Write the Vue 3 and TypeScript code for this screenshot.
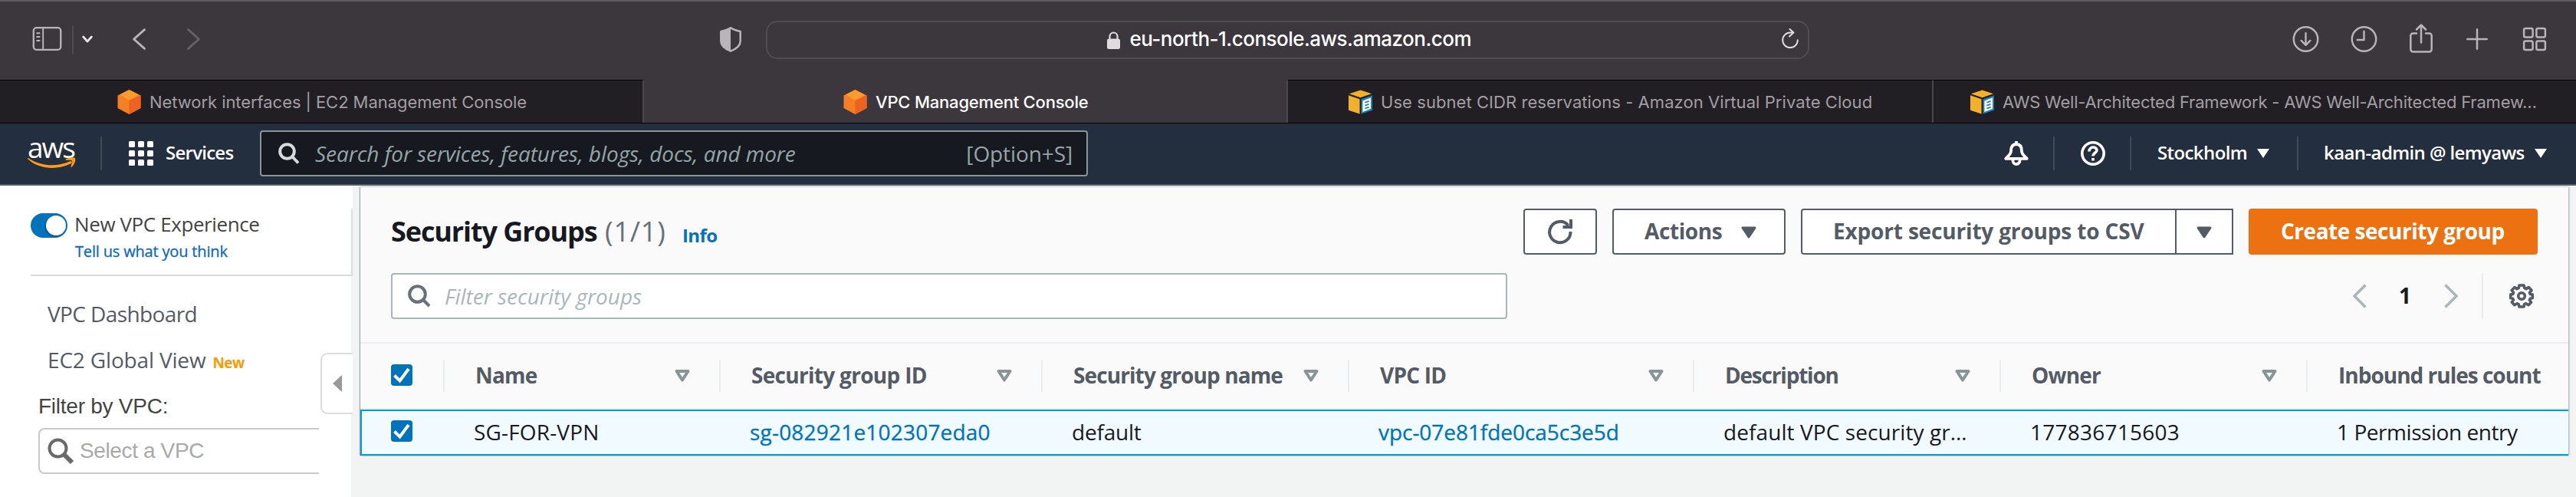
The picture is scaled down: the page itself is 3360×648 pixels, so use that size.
<script setup lang="ts">
interface Tab { title: string; icon: 'cube' | 'doc'; active?: boolean; cls: string }
interface Column { key: string; label: string; value: string; link?: boolean; sortable: boolean }

const tabs: Tab[] = [
  { title: 'Network interfaces | EC2 Management Console', icon: 'cube', cls: 't1' },
  { title: 'VPC Management Console', icon: 'cube', active: true, cls: 't2' },
  { title: 'Use subnet CIDR reservations - Amazon Virtual Private Cloud', icon: 'doc', cls: 't3' },
  { title: 'AWS Well-Architected Framework - AWS Well-Architected Framew…', icon: 'doc', cls: 't4' },
]

const columns: Column[] = [
  { key: 'name', label: 'Name', value: 'SG-FOR-VPN', sortable: true },
  { key: 'sgid', label: 'Security group ID', value: 'sg-082921e102307eda0', link: true, sortable: true },
  { key: 'sgname', label: 'Security group name', value: 'default', sortable: true },
  { key: 'vpc', label: 'VPC ID', value: 'vpc-07e81fde0ca5c3e5d', link: true, sortable: true },
  { key: 'desc', label: 'Description', value: 'default VPC security gr…', sortable: true },
  { key: 'owner', label: 'Owner', value: '177836715603', sortable: true },
  { key: 'inbound', label: 'Inbound rules count', value: '1 Permission entry', sortable: false },
]
</script>

<template>
  <div class="screen">
    <header class="toolbar">
      <svg class="i-side" viewBox="0 0 39 32" fill="none" stroke="#b9b3ba" stroke-width="2.4">
        <rect x="1.2" y="1.2" width="36.6" height="29.6" rx="4" />
        <path d="M14 1V31M5 8.5h5M5 13.5h5M5 18.5h5" stroke-width="2" />
      </svg>
      <span class="tb-div"></span>
      <svg class="i-chev" viewBox="0 0 14 10" fill="none" stroke="#e6e2e7" stroke-width="2.8" stroke-linecap="round" stroke-linejoin="round"><path d="M1.6 2 7 8l5.400-6" /></svg>
      <svg class="i-back" viewBox="0 0 17 28" fill="none" stroke="#b9b3ba" stroke-width="2.8" stroke-linecap="round" stroke-linejoin="round"><path d="M15.500 1.600 1.600 14l13.900 12.400" /></svg>
      <svg class="i-fwd" viewBox="0 0 17 28" fill="none" stroke="#676268" stroke-width="2.8" stroke-linecap="round" stroke-linejoin="round"><path d="M1.500 1.600 15.400 14 1.500 26.400" /></svg>
      <svg class="i-shield" viewBox="0 0 28 33">
        <path d="M14 1.300C18 4 22 5 26.700 6v12.500c0 6.500-6 10.500-12.700 13.200C7.300 29 1.300 25 1.300 18.500V6C6 5 10 4 14 1.300Z" fill="none" stroke="#b9b3ba" stroke-width="2.500" stroke-linejoin="round" />
        <path d="M14 1.300V31.700C7.300 29 1.300 25 1.300 18.500V6C6 5 10 4 14 1.300Z" fill="#b9b3ba" />
      </svg>
      <div class="url">
        <div class="url-label">
          <svg class="i-lock" viewBox="0 0 17 23"><rect y="9.500" width="17" height="13.500" rx="2.500" fill="#dedcdf" /><path d="M3.500 10.500V6.500a5 5 0 0 1 10 0v4" fill="none" stroke="#dedcdf" stroke-width="2.200" /></svg>
          <span>eu-north-1.console.aws.amazon.com</span>
        </div>
        <svg class="i-reload" viewBox="0 0 22 26" fill="none" stroke="#dedcdf" stroke-width="2" stroke-linecap="round" stroke-linejoin="round"><path d="M14.500 5.500H11a9.800 9.800 0 1 0 9.800 9.800M10.500 1l5 4.500-5.500 5" /></svg>
      </div>
      <div class="tools">
        <svg class="k1" viewBox="0 0 35 35"><circle cx="17.500" cy="17.500" r="16.200" /><path d="M17.500 9.500v16M11.500 19.500l6 6 6-6" /></svg>
        <svg class="k2" viewBox="0 0 35 35"><circle cx="17.500" cy="17.500" r="16.200" /><path d="M17.500 7v11.500H8.500" /></svg>
        <svg class="k3" viewBox="0 0 30 38"><path d="M9 12.500H4.500a3.200 3.200 0 0 0-3.200 3.200v17.600a3.200 3.200 0 0 0 3.200 3.200h21a3.200 3.200 0 0 0 3.200-3.200V15.700a3.200 3.200 0 0 0-3.200-3.200H21M15 24.500V2M9 7.500l6-6 6 6" /></svg>
        <svg class="k4" viewBox="0 0 28 28"><path d="M14 1.300v25.400M1.300 14h25.400" /></svg>
        <svg class="k5" viewBox="0 0 30 30"><rect x="1.100" y="1.100" width="11.500" height="11.500" rx="2" /><rect x="17.400" y="1.100" width="11.500" height="11.500" rx="2" /><rect x="1.100" y="17.400" width="11.500" height="11.500" rx="2" /><rect x="17.400" y="17.400" width="11.500" height="11.500" rx="2" /></svg>
      </div>
    </header>

    <div class="tabs">
      <div v-for="t in tabs" :key="t.title" class="tab" :class="[t.cls, { active: t.active }]">
        <svg v-if="t.icon === 'cube'" class="fav" viewBox="0 0 31 32">
          <path d="M.5 7.500 15.500 0l15 7.500V24l-15 8-15-8Z" fill="#f47f24" />
          <path d="M15.500 14 30.500 7v17l-15 8Z" fill="#ec6220" />
          <path d="M15.500 0 28 6.500 15.500 14 3 6.500Z" fill="#ff9a2c" />
        </svg>
        <svg v-else class="fav" viewBox="0 0 32 32">
          <path d="M16 0 31 4.800 16 10 1 4.800Z" fill="#f2b02b" />
          <path d="M0 7 15 12v20L0 27Z" fill="#f2b02b" />
          <path d="M17 12 32 7v20l-15 5Z" fill="#1b7dbb" />
          <path d="M19 14.500 30 10v15l-11 4.500Z" fill="#fff" />
          <path d="M22 16.800l5.500-2M22 20.800l5.500-2M22 24.800l5.500-2" stroke="#1b7dbb" stroke-width="1.800" />
        </svg>
        <span>{{ t.title }}</span>
      </div>
    </div>

    <nav class="nav">
      <div class="logo">
        <span>aws</span>
        <svg viewBox="0 0 63 15"><path d="M1 1C17 12 38 13 55 5.500c2.500-1 4 1 1.500 2.800C38 17.500 14 15.500.3 2.200-.3 1.300.3.500 1 1Z" fill="#ff9a1c" /><path d="M50 2.500c3-2.300 10-3 11.800-1.500 1.500 2-.5 8.500-4 11.500-1 .8-1.800.2-1.300-1 1.300-2.800 2.300-6 1.600-7-.8-1-4.500-1-7.500-.7-1.200.1-1.500-.7-.6-1.300Z" fill="#ff9a1c" /></svg>
      </div>
      <span class="vdiv d1"></span>
      <svg class="i-grid" viewBox="0 0 32 32" fill="#fff"><template v-for="r in 3" :key="r"><rect v-for="c in 3" :key="c" :x="(c - 1) * 12" :y="(r - 1) * 12" width="8" height="8" rx="1.500" /></template></svg>
      <span class="services">Services</span>
      <div class="gsearch">
        <svg class="i-mag" viewBox="0 0 28 28" fill="none" stroke="#d5dbdb" stroke-width="4"><circle cx="11.500" cy="11.500" r="9.300" /><path d="M18 18l8 8.500" /></svg>
        <span class="ph">Search for services, features, blogs, docs, and more</span>
        <span class="kbd">[Option+S]</span>
      </div>
      <svg class="i-bell" viewBox="0 0 32 32" fill="none" stroke="#fff" stroke-width="3.800" stroke-linejoin="round"><path d="M16 0v4M16 4C10 4 9 9 9 13c0 4-3 6-6.800 9.800h27.600C26 19 23 17 23 13c0-4-1-9-7-9Z" /><path d="M11.500 23v2.500a4.500 4.500 0 0 0 9 0V23" /></svg>
      <span class="vdiv d2"></span>
      <svg class="i-help" viewBox="0 0 32 32" fill="none" stroke="#fff" stroke-width="3.600"><circle cx="16" cy="16" r="14.200" /><path d="M11 13.500c0-7 10-7 10-1.500 0 3.500-5 3-5 7.500M16 22v3.600" /></svg>
      <span class="vdiv d3"></span>
      <span class="region">Stockholm</span>
      <svg class="caret c1" viewBox="0 0 16 12"><path d="M0 0h16L8 12Z" fill="#fff" /></svg>
      <span class="vdiv d4"></span>
      <span class="user">kaan-admin @ lemyaws</span>
      <svg class="caret c2" viewBox="0 0 16 12"><path d="M0 0h16L8 12Z" fill="#fff" /></svg>
    </nav>

    <div class="body">
      <aside class="side">
        <div class="exp">
          <div class="exp-row"><span class="toggle"><i></i></span><span class="exp-t">New VPC Experience</span></div>
          <a class="tell">Tell us what you think</a>
        </div>
        <div class="link l1">VPC Dashboard</div>
        <div class="link l2"><span>EC2 Global View</span><b>New</b></div>
        <div class="filter-l">Filter by VPC:</div>
        <div class="vpc-in">
          <svg viewBox="0 0 34 34" fill="none" stroke="#6a6a6a"><circle cx="13.500" cy="13.500" r="11" stroke-width="4" /><path d="M22 22l10 10" stroke-width="6" /></svg>
          <span>Select a VPC</span>
        </div>
        <button class="collapse"><svg viewBox="0 0 12 22"><path d="M12 0v22L0 11Z" fill="#999" /></svg></button>
      </aside>

      <main class="panel">
        <div class="head">
          <h1>Security Groups</h1><span class="count">(1/1)</span><a class="info">Info</a>
          <div class="actions">
            <button class="btn refresh"><svg viewBox="0 0 32 32" fill="none" stroke="#545b64" stroke-width="4"><path d="M29.500 16A13.700 13.700 0 1 1 26.500 8M30 0v10H19.500" /></svg></button>
            <button class="btn act"><span>Actions</span><svg class="tri" viewBox="0 0 20 16"><path d="M2 2h16l-8 12Z" fill="#545b64" stroke="#545b64" stroke-width="3" stroke-linejoin="round" /></svg></button>
            <div class="split">
              <button class="btn exp-b"><span>Export security groups to CSV</span></button>
              <button class="btn more"><svg class="tri" viewBox="0 0 20 16"><path d="M2 2h16l-8 12Z" fill="#545b64" stroke="#545b64" stroke-width="3" stroke-linejoin="round" /></svg></button>
            </div>
            <button class="btn create"><span>Create security group</span></button>
          </div>
        </div>
        <div class="tools-row">
          <div class="search">
            <svg viewBox="0 0 30 30" fill="none" stroke="#687078" stroke-width="4"><circle cx="12.500" cy="12.500" r="10.300" /><path d="M19.500 19.500l8.500 8.500" /></svg>
            <span>Filter security groups</span>
          </div>
          <svg class="pg p1" viewBox="0 0 18 32" fill="none" stroke="#aab7b8" stroke-width="3.600"><path d="M16.500 1.500 2 16l14.500 14.500" /></svg>
          <span class="page">1</span>
          <svg class="pg p2" viewBox="0 0 18 32" fill="none" stroke="#aab7b8" stroke-width="3.600"><path d="M1.500 1.500 16 16 1.500 30.500" /></svg>
          <span class="pdiv"></span>
          <svg class="gear" viewBox="0 0 32 32" fill="none" stroke="#545b64" stroke-width="3.600" stroke-linejoin="round">
            <path d="M13 2h6l.8 3.700 2.200.9 3.200-2L29 8.500 26.500 11.500l.8 2 3 .5v4.500l-3 .7-.9 2 2.100 3-3.500 3.500-3.200-2-2.200.9L19 30h-6l-.8-3.400-2.200-.9-3.200 2L3.300 24l2.100-2.800-.9-2L1.700 18.500V14l3-.5.8-2L3.200 8.500 6.800 4.600l3.200 2 2.200-.9Z" />
            <circle cx="16" cy="16" r="4.300" />
          </svg>
        </div>

        <div class="grid thead">
          <div class="cell check"><span class="cb"><svg viewBox="0 0 28 28" fill="none" stroke="#fff" stroke-width="4"><path d="M4.500 14.500l7 7L23 6" /></svg></span></div>
          <div v-for="c in columns" :key="c.key" class="cell" :class="c.key">
            <span>{{ c.label }}</span>
            <svg v-if="c.sortable" class="sort" viewBox="0 0 20 16"><path d="M2.500 2h15L10 13.500Z" fill="none" stroke="#879596" stroke-width="4" stroke-linejoin="round" /></svg>
          </div>
        </div>
        <div class="grid row">
          <div class="cell check"><span class="cb"><svg viewBox="0 0 28 28" fill="none" stroke="#fff" stroke-width="4"><path d="M4.500 14.500l7 7L23 6" /></svg></span></div>
          <div v-for="c in columns" :key="c.key" class="cell" :class="[c.key, { lnk: c.link }]"><span>{{ c.value }}</span></div>
        </div>
      </main>
    </div>
  </div>
</template>

<style>
body { margin: 0; background: #f2f3f3; overflow: hidden; }
</style>

<style scoped>
.screen { width: 3360px; height: 648px; overflow: hidden; display: flex; flex-direction: column; background: #f2f3f3; font-family: "Open Sans", "Noto Sans", sans-serif; white-space: nowrap; }
.screen * { box-sizing: border-box; }
svg { flex: none; display: block; overflow: visible; }
button { font: inherit; margin: 0; padding: 0; }

.toolbar { height: 104px; background: #3c363d; border-top: 2px solid #5e595f; display: flex; align-items: flex-start; flex: none; font-family: Inter, sans-serif; }
.i-side { width: 39px; height: 31px; margin: 33px 0 0 42px; }
.tb-div { width: 2px; height: 36px; background: #504a51; margin: 32px 0 0 13px; }
.i-chev { width: 14px; height: 10px; margin: 44px 0 0 11px; }
.i-back { width: 17px; height: 28px; margin: 35px 0 0 52px; }
.i-fwd { width: 17px; height: 28px; margin: 35px 0 0 54px; }
.i-shield { width: 28px; height: 33px; margin: 33px 0 0 678px; }
.url { width: 1361px; height: 50px; margin: 25px 0 0 32px; border: 2px solid #504a52; border-radius: 15px; display: flex; align-items: center; justify-content: flex-end; }
.url-label { display: flex; align-items: center; margin-right: 405px; color: #fff; font-size: 26px; font-weight: 500; letter-spacing: -0.52px; padding-bottom: 3px; }
.i-lock { width: 17px; height: 23px; margin-right: 12px; margin-top: 3px; }
.i-reload { width: 22px; height: 26px; margin-right: 12px; margin-bottom: 4px; }
.tools { display: flex; margin-left: 630px; fill: none; stroke: #b9b3ba; stroke-width: 2.500px; stroke-linecap: round; stroke-linejoin: round; }
.k1 { width: 35px; height: 34px; margin-top: 32px; }
.k2 { width: 35px; height: 34px; margin: 32px 0 0 41px; }
.k3 { width: 30px; height: 38px; margin: 29px 0 0 42px; }
.k4 { width: 28px; height: 28px; margin: 35px 0 0 44px; }
.k5 { width: 30px; height: 30px; margin: 34px 0 0 46px; }

.tabs { height: 57px; flex: none; display: grid; grid-template-columns: 840px 840px 842px 838px; font-family: Inter, sans-serif; font-size: 22px; color: #a19ea2; border-bottom: 1px solid #000; background: #3c363d; }
.tab { display: flex; align-items: center; border-top: 1px solid #000; border-right: 2px solid #4a464c; background: #211f24; }
.tab.active { background: #3c363d; color: #fff; font-weight: 500; border-top-color: #3c363d; }
.tab:last-child { border-right: 0; }
.fav { width: 31px; height: 32px; margin-right: 11px; }
.t1 { padding-left: 153px; letter-spacing: -0.06px; }
.t2 { padding-left: 260px; letter-spacing: -0.2px; }
.t3 { padding-left: 79px; letter-spacing: 0.06px; }
.t4 { padding-left: 48px; letter-spacing: -0.2px; }

.nav { height: 81px; flex: none; background: #232f3e; border-bottom: 2px solid #545b64; padding-bottom: 1px; display: flex; align-items: center; color: #fff; font-size: 24px; font-weight: 600; }
.logo { width: 63px; height: 40px; margin-left: 36px; display: flex; flex-direction: column; justify-content: flex-end; }
.logo span { font-size: 37px; font-weight: 500; line-height: 30px; letter-spacing: -2px; height: 28px; }
.logo svg { width: 63px; height: 15px; }
.vdiv { width: 2px; height: 44px; background: #414b57; }
.d1 { margin-left: 32px; }
.i-grid { width: 32px; height: 32px; margin-left: 35px; }
.services { margin-left: 16px; width: 123px; letter-spacing: -0.75px; padding-bottom: 3px; }
.gsearch { width: 1080px; height: 60px; background: #16191f; border: 2px solid #879596; border-radius: 4px; display: flex; align-items: center; color: #95a5a6; font-size: 28px; font-weight: 400; padding: 0 18px 0 22px; }
.i-mag { width: 28px; height: 28px; margin-right: 20px; }
.ph { font-style: italic; font-weight: 500; letter-spacing: -0.07px; flex: 1; }
.kbd { letter-spacing: -0.1px; }
.i-bell { width: 32px; height: 32px; margin-left: 1195px; }
.d2 { margin-left: 32px; }
.i-help { width: 32px; height: 32px; margin-left: 34px; }
.d3 { margin-left: 32px; }
.region { margin-left: 34px; width: 130px; letter-spacing: -0.6px; padding-bottom: 3px; }
.caret { width: 16px; height: 12px; }
.d4 { margin-left: 36px; }
.user { margin-left: 33px; width: 275px; letter-spacing: -0.6px; padding-bottom: 3px; }

.body { display: flex; flex: 1; }
.side { width: 460px; background: #fff; position: relative; color: #444; border-right: 2px solid #f2f3f3; }
.exp { margin-left: 40px; height: 118px; border-bottom: 2px solid #d9d9d9; padding-top: 36px; margin-right: -2px; background: linear-gradient(#dcdcdc, #dcdcdc) right 0 top 30px / 2px 100% no-repeat, #fff; }
.exp-row { display: flex; align-items: center; height: 32px; }
.toggle { width: 48px; height: 32px; border-radius: 16px; background: #0073bb; display: flex; justify-content: flex-end; padding: 3px 2px 3px 0; }
.toggle i { width: 26px; height: 26px; border-radius: 50%; background: #fff; box-shadow: -1px 1px 2px rgba(0,0,0,.35); }
.exp-t { margin-left: 9px; font-size: 26px; letter-spacing: -0.4px; padding-bottom: 4px; }
.tell { display: block; margin-left: 58px; font-size: 20px; line-height: 28px; margin-top: 4px; color: #0a68c4; letter-spacing: -0.17px; -webkit-text-stroke: .3px #0a68c4; }
.link { margin-left: 62px; font-size: 28px; line-height: 40px; height: 40px; color: #545b64; }
.l1 { margin-top: 29px; letter-spacing: -0.6px; }
.l2 { margin-top: 20px; letter-spacing: -0.17px; display: flex; align-items: baseline; }
.l2 b { color: #ff9900; font-size: 19px; line-height: 20px; letter-spacing: -0.6px; margin-left: 9px; }
.filter-l { margin: 21px 0 0 50px; font: 28px/40px "Liberation Sans", Arial, sans-serif; letter-spacing: -0.25px; }
.vpc-in { margin: 8px 0 0 50px; width: 366px; height: 60px; border: 2px solid #c9c9c9; border-right: 0; border-radius: 8px 0 0 8px; display: flex; align-items: center; padding-left: 10px; font: 28px "Liberation Sans", Arial, sans-serif; color: #a9a9a9; letter-spacing: -0.37px; }
.vpc-in svg { width: 34px; height: 34px; margin-right: 8px; }
.collapse { position: absolute; left: 418px; top: 218px; width: 42px; height: 80px; background: #fff; border: 2px solid #ddd; border-right: 0; border-radius: 9px 0 0 9px; padding: 0 0 0 14px; }
.collapse svg { width: 12px; height: 22px; }

.panel { width: 2880px; margin: 2px 0 0 10px; height: 350px; background: #fafafa; box-shadow: -1px 0 1px rgba(0,28,36,.35), 1px 0 2px rgba(0,28,36,.35); }
.head { height: 88px; padding: 28px 40px 0 40px; display: flex; }
h1 { margin: 0; font-size: 36px; line-height: 60px; font-weight: 700; color: #16191f; letter-spacing: -1.100px; width: 279px; }
.count { font-size: 36px; line-height: 60px; color: #687078; letter-spacing: 0.8px; width: 101px; }
.info { font-size: 24px; line-height: 69px; font-weight: 700; color: #0073bb; letter-spacing: -0.6px; }
.actions { margin-left: auto; display: flex; gap: 20px; }
.btn { height: 60px; background: #fff; border: 2px solid #545b64; border-radius: 4px; color: #545b64; font-size: 28px; font-weight: 700; display: flex; align-items: center; padding-bottom: 2px; }
.refresh { width: 96px; justify-content: center; }
.refresh svg { width: 32px; height: 32px; margin-top: 2px; }
.act { width: 226px; padding-left: 40px; letter-spacing: -0.4px; }
.act span { width: 126px; text-align: left; }
.tri { width: 20px; height: 16px; margin-top: 3px; }
.split { display: flex; }
.exp-b { width: 490px; padding-left: 40px; border-radius: 4px 0 0 4px; letter-spacing: -0.17px; }
.more { width: 76px; margin-left: -2px; border-radius: 0; justify-content: center; }
.create { width: 377px; background: #ec7211; border-color: #ec7211; color: #fff; padding-left: 40px; letter-spacing: -0.48px; }
.tools-row { height: 114px; padding: 24px 40px 0 40px; display: flex; align-items: flex-start; }
.search { width: 1456px; height: 60px; background: #fff; border: 2px solid #aab7b8; border-radius: 4px; display: flex; align-items: center; padding-left: 20px; font-size: 28px; font-style: italic; font-weight: 500; color: #aab7b8; letter-spacing: 0; }
.search svg { width: 30px; height: 30px; margin-right: 18px; }
.pg { width: 18px; height: 32px; margin-top: 14px; }
.p1 { margin-left: 1103px; }
.page { width: 16px; margin-left: 42px; font-size: 28px; font-weight: 700; line-height: 58px; color: #16191f; }
.p2 { margin-left: 43px; }
.pdiv { width: 2px; height: 60px; background: #eaeded; margin-left: 31px; }
.gear { width: 32px; height: 32px; margin: 14px 0 0 34px; }

.grid { display: grid; grid-template-columns: 110px 360px 420px 400px 450px 400px 400px 340px; font-size: 28px; }
.thead { height: 88px; border-top: 2px solid #eaeded; border-bottom: 2px solid #eaeded; align-items: center; color: #545b64; font-weight: 700; }
.cell { display: flex; align-items: center; justify-content: space-between; padding: 0 38px 0 40px; }
.thead .cell { height: 42px; border-right: 2px solid #eaeded; }
.thead .cell span { margin-bottom: 2px; }
.thead .cell:last-child { border-right: 0; }
.thead .name, .thead .vpc, .thead .owner { letter-spacing: -0.8px; }
.thead .sgid { letter-spacing: -0.7px; }
.thead .sgname { letter-spacing: -0.9px; }
.thead .desc { letter-spacing: -1.200px; }
.thead .inbound { letter-spacing: -1px; padding-right: 0; }
.sort { width: 20px; height: 16px; }
.cb { width: 28px; height: 28px; background: #0073bb; border-radius: 4px; }
.row { height: 60px; border: 2px solid #00a1c9; border-right: 0; background: #f1faff; color: #16191f; }
.row .cell { padding: 0 0 2px 36px; justify-content: flex-start; }
.row .check { padding: 0 0 4px 38px; }
.row .lnk { color: #0073bb; -webkit-text-stroke: .3px #0073bb; }
.row .name { letter-spacing: 0.15px; }
.row .sgid { letter-spacing: 0.2px; }
.row .sgname { letter-spacing: -0.2px; }
.row .vpc { letter-spacing: -0.05px; }
.row .desc { letter-spacing: 0.08px; }
.row .owner { letter-spacing: 0.25px; }
.row .inbound { letter-spacing: -0.45px; }
</style>
